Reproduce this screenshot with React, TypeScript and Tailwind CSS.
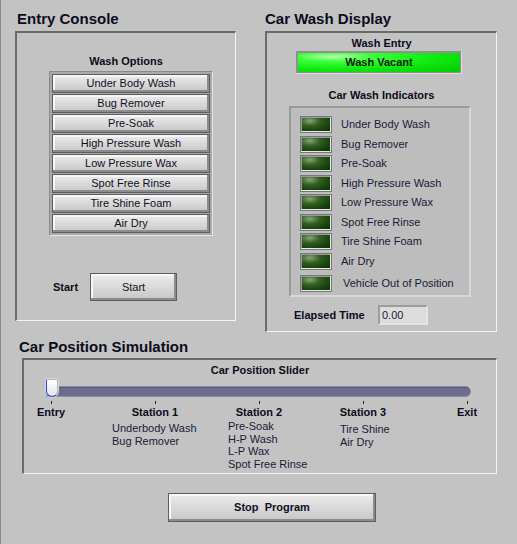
import { ReactNode } from "react";

const font = "font-['Liberation_Sans',Arial,sans-serif]";

const washOptions = [
    "Under Body Wash",
    "Bug Remover",
    "Pre-Soak",
    "High Pressure Wash",
    "Low Pressure Wax",
    "Spot Free Rinse",
    "Tire Shine Foam",
    "Air Dry",
];

const stations = [
    { name: "Entry", steps: [] as string[] },
    { name: "Station 1", steps: ["Underbody Wash", "Bug Remover"] },
    { name: "Station 2", steps: ["Pre-Soak", "H-P Wash", "L-P Wax", "Spot Free Rinse"] },
    { name: "Station 3", steps: ["Tire Shine", "Air Dry"] },
    { name: "Exit", steps: [] as string[] },
];

const Panel = ({ className, children }: { className: string; children: ReactNode }) => (
    <div
        className={`border-t-2 border-l-2 border-b border-r border-t-[#6a6a6a] border-l-[#6a6a6a] border-b-[#f2f2f2] border-r-[#f2f2f2] ${className}`}
    >
        {children}
    </div>
);

const Button = ({ text, className, bold }: { text: string; className: string; bold?: boolean }) => (
    <button
        className={`flex items-center justify-center border border-[#5e5e5e] bg-gradient-to-b from-[#ededed] to-[#c6c6c6] shadow-[inset_-2px_-2px_0_#8c8c8c,inset_2px_2px_0_#f7f7f7] text-[11px] text-[#101024] ${bold ? "font-bold" : ""} ${className}`}
    >
        {text}
    </button>
);

const Led = () => (
    <div className="w-[32px] h-[17px] border border-[#777] bg-[#9a9a9a] p-[1px] shadow-[inset_-1px_-1px_0_#e8e8e8]">
        <div className="w-full h-full bg-[radial-gradient(ellipse_at_28%_22%,#86a676_0%,#335f22_35%,#14400b_75%,#0c3206_100%)]" />
    </div>
);

export default function App() {
    return (
        <div className={`w-[517px] h-[544px] bg-[#c3c3c3] border-l border-[#8a8a8a] flex flex-col text-[#0c0c1c] ${font}`}>
            <div className="flex pt-[9px]">
                {/* Entry Console */}
                <div className="ml-[14px] w-[221px] flex flex-col">
                    <div className="h-[22px] leading-[20px] pl-[2px] text-[15px] font-bold">Entry Console</div>
                    <Panel className="h-[290px] flex flex-col">
                        <div className="pt-[21px] h-[35px] leading-[14px] text-center text-[11px] font-bold">Wash Options</div>
                        <div className="mt-[3px] ml-[32px] w-[164px] p-[2px] pt-[1px] border border-t-[#8a8a8a] border-l-[#8a8a8a] border-b-[#e6e6e6] border-r-[#e6e6e6] bg-[#a9a9a9] flex flex-col">
                            {washOptions.map((o) => (
                                <Button key={o} text={o} className="mt-[1px] h-[19px] w-full" />
                            ))}
                        </div>
                        <div className="mt-[37px] ml-[36px] flex items-center">
                            <div className="w-[37px] text-[11px] font-bold">Start</div>
                            <Button text="Start" className="w-[87px] h-[28px]" />
                        </div>
                    </Panel>
                </div>

                {/* Car Wash Display */}
                <div className="ml-[29px] w-[232px] flex flex-col">
                    <div className="h-[22px] leading-[20px] text-[15px] font-bold">Car Wash Display</div>
                    <Panel className="h-[301px] flex flex-col">
                        <div className="pt-[3px] h-[17px] leading-[14px] text-center text-[11px] font-bold">Wash Entry</div>
                        <div className="mt-[1px] ml-[29px] w-[166px] h-[23px] p-[2px] bg-[#909090] shadow-[inset_-1px_-1px_0_#dcdcdc]">
                            <div className="w-full h-full bg-[radial-gradient(ellipse_at_22%_20%,#b6ffb0_0%,#3cff3c_22%,#10ec10_55%,#00c800_100%)] flex items-center justify-center text-[11px] font-bold text-[#0a1a0a]">
                                Wash Vacant
                            </div>
                        </div>
                        <div className="mt-[14px] h-[14px] leading-[14px] text-center text-[11px] font-bold">Car Wash Indicators</div>
                        <div className="mt-[4px] ml-[22px] w-[182px] h-[191px] border-2 border-t-[#9a9a9a] border-l-[#9a9a9a] border-b-[#d8d8d8] border-r-[#d8d8d8] bg-[#bdbdbd] pt-[8px] pl-[9px] flex flex-col">
                            {washOptions.map((o) => (
                                <div key={o} className="h-[19.5px] flex items-start">
                                    <Led />
                                    <span className="ml-[9px] leading-[17px] text-[11px] text-[#1a1a3a]">{o}</span>
                                </div>
                            ))}
                            <div className="mt-[2px] h-[19px] flex items-center">
                                <div className="h-[19px] flex items-center"><Led /></div>
                                <span className="ml-[11px] text-[11px] text-[#1a1a3a]">Vehicle Out of Position</span>
                            </div>
                        </div>
                        <div className="mt-[8px] ml-[27px] flex items-center">
                            <div className="w-[84px] text-[11px] font-bold">Elapsed Time</div>
                            <div className="w-[50px] h-[20px] border-2 border-t-[#9c9c9c] border-l-[#9c9c9c] border-b-[#e4e4e4] border-r-[#e4e4e4] bg-[#dcdcdc] pl-[2px] text-[11px] leading-[16px] text-[#1a1a3a]">
                                0.00
                            </div>
                        </div>
                    </Panel>
                </div>
            </div>

            {/* Car Position Simulation */}
            <div className="mt-[6px] ml-[18px] h-[18px] leading-[18px] text-[15px] font-bold">Car Position Simulation</div>
            <Panel className="mt-[2px] ml-[21px] w-[475px] h-[116px] flex flex-col">
                <div className="pt-[3px] h-[17px] leading-[14px] text-center text-[11px] font-bold">Car Position Slider</div>
                <div className="relative mt-[2px] ml-[22px] w-[425px] h-[18px]">
                    <div className="absolute left-0 right-0 bottom-0 h-[11px] rounded-r-full bg-[#6c6c8c] border border-[#8c8ca4] shadow-[inset_0_1px_0_#5a5a78]" />
                    <div className="absolute left-0 top-0 w-[12px] h-[18px] rounded-b-[6px] rounded-t-[2px] bg-gradient-to-b from-white to-[#e6e6ec] border border-[#b8b8c4] border-b-[#2a4adc] border-l-[#2a4adc] shadow-[0_0_0_1px_#d4d4d4]" />
                </div>
                <div className="mt-[4px] flex">
                    {stations.map((s, i) => (
                        <div key={s.name} className={`w-[54px] flex flex-col items-center ${i > 0 ? "ml-[50px]" : ""}`}>
                            <div className="w-px h-[3px] bg-[#222]" />
                            <div className="mt-[1px] leading-[14px] whitespace-nowrap text-[11px] font-bold">{s.name}</div>
                        </div>
                    ))}
                </div>
                <div className="flex text-[11px] leading-[12.5px] text-[#1a1a3a]">
                    <div className="ml-[88px] w-[116px] mt-[3px] flex flex-col">
                        {stations[1].steps.map((t) => <span key={t}>{t}</span>)}
                    </div>
                    <div className="w-[112px] mt-[1px] flex flex-col">
                        {stations[2].steps.map((t) => <span key={t}>{t}</span>)}
                    </div>
                    <div className="mt-[4px] flex flex-col">
                        {stations[3].steps.map((t) => <span key={t}>{t}</span>)}
                    </div>
                </div>
            </Panel>

            <Button text="Stop  Program" bold className="mt-[19px] ml-[167px] w-[208px] h-[29px] whitespace-pre" />
        </div>
    );
}
